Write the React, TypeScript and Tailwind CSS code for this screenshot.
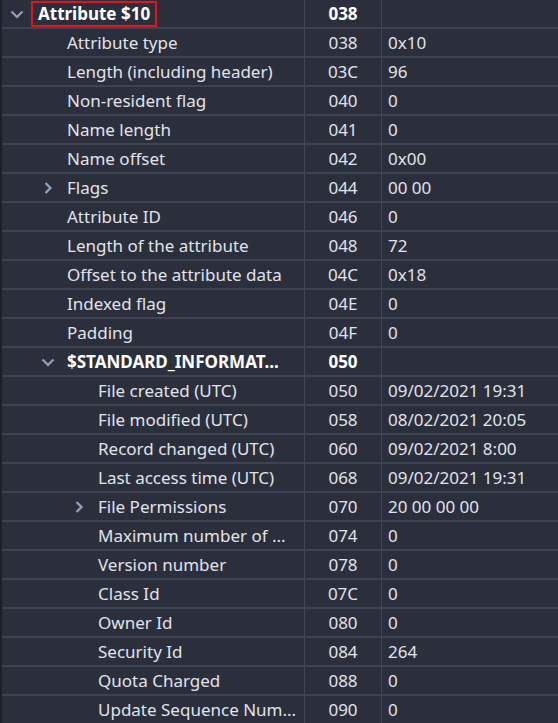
import React from 'react';

type Row = {
  name: string;
  offset: string;
  value?: string;
  level: number;
  chevron?: 'open' | 'closed';
  bold?: boolean;
  boxed?: boolean;
};

const rows: Row[] = [
  { name: 'Attribute $10', offset: '038', level: 0, chevron: 'open', bold: true, boxed: true },
  { name: 'Attribute type', offset: '038', value: '0x10', level: 1 },
  { name: 'Length (including header)', offset: '03C', value: '96', level: 1 },
  { name: 'Non-resident flag', offset: '040', value: '0', level: 1 },
  { name: 'Name length', offset: '041', value: '0', level: 1 },
  { name: 'Name offset', offset: '042', value: '0x00', level: 1 },
  { name: 'Flags', offset: '044', value: '00 00', level: 1, chevron: 'closed' },
  { name: 'Attribute ID', offset: '046', value: '0', level: 1 },
  { name: 'Length of the attribute', offset: '048', value: '72', level: 1 },
  { name: 'Offset to the attribute data', offset: '04C', value: '0x18', level: 1 },
  { name: 'Indexed flag', offset: '04E', value: '0', level: 1 },
  { name: 'Padding', offset: '04F', value: '0', level: 1 },
  { name: '$STANDARD_INFORMAT...', offset: '050', level: 1, chevron: 'open', bold: true },
  { name: 'File created (UTC)', offset: '050', value: '09/02/2021 19:31', level: 2 },
  { name: 'File modified (UTC)', offset: '058', value: '08/02/2021 20:05', level: 2 },
  { name: 'Record changed (UTC)', offset: '060', value: '09/02/2021 8:00', level: 2 },
  { name: 'Last access time (UTC)', offset: '068', value: '09/02/2021 19:31', level: 2 },
  { name: 'File Permissions', offset: '070', value: '20 00 00 00', level: 2, chevron: 'closed' },
  { name: 'Maximum number of ...', offset: '074', value: '0', level: 2 },
  { name: 'Version number', offset: '078', value: '0', level: 2 },
  { name: 'Class Id', offset: '07C', value: '0', level: 2 },
  { name: 'Owner Id', offset: '080', value: '0', level: 2 },
  { name: 'Security Id', offset: '084', value: '264', level: 2 },
  { name: 'Quota Charged', offset: '088', value: '0', level: 2 },
  { name: 'Update Sequence Num...', offset: '090', value: '0', level: 2 },
];

// tree indent: 31px per level
const indent = ['pl-[2px]', 'pl-[33px]', 'pl-[64px]'];

const Chevron = ({ open }: { open: boolean }) => (
  <svg width="16" height="16" viewBox="0 0 16 16" className="shrink-0">
    {open ? (
      <path d="M2.5 5.5 L8 11 L13.5 5.5" fill="none" stroke="#8ea3c2" strokeWidth="2.2" />
    ) : (
      <path d="M5.5 3 L10.5 8 L5.5 13" fill="none" stroke="#8ea3c2" strokeWidth="2.2" />
    )}
  </svg>
);

export default function App() {
  return (
    <div
      className="flex h-[723px] w-[558px] overflow-hidden bg-[#2b2f3c] text-[17px] text-[#e0e3eb]"
      style={{ fontFamily: '"Noto Sans", "Open Sans", sans-serif' }}
    >
      <div className="w-[2px] shrink-0 bg-[#1e2027]" />
      <div className="flex flex-1 flex-col">
        {rows.map((r, i) => (
          <div key={i} className="flex h-[29px] shrink-0 border-b-2 border-[#3e4352]">
            <div className={`flex w-[303px] shrink-0 items-center border-r border-[#434858] ${indent[r.level]}`}>
              <span className="flex w-[26px] shrink-0 items-center justify-center">
                {r.chevron && <Chevron open={r.chevron === 'open'} />}
              </span>
              <span
                className={`whitespace-nowrap leading-none ${r.bold ? 'font-bold text-white' : ''} ${
                  r.boxed ? 'ml-[1px] border-2 border-[#e8101a] px-[5px] pb-[3px] pt-[2px]' : 'ml-[6px]'
                }`}
              >
                {r.name}
              </span>
            </div>
            <div
              className={`flex w-[77px] shrink-0 items-center justify-center border-r border-[#434858] ${
                r.bold ? 'font-bold text-white' : ''
              }`}
            >
              {r.offset}
            </div>
            <div className="flex flex-1 items-center pl-[6px] whitespace-nowrap">{r.value ?? ''}</div>
          </div>
        ))}
      </div>
    </div>
  );
}
